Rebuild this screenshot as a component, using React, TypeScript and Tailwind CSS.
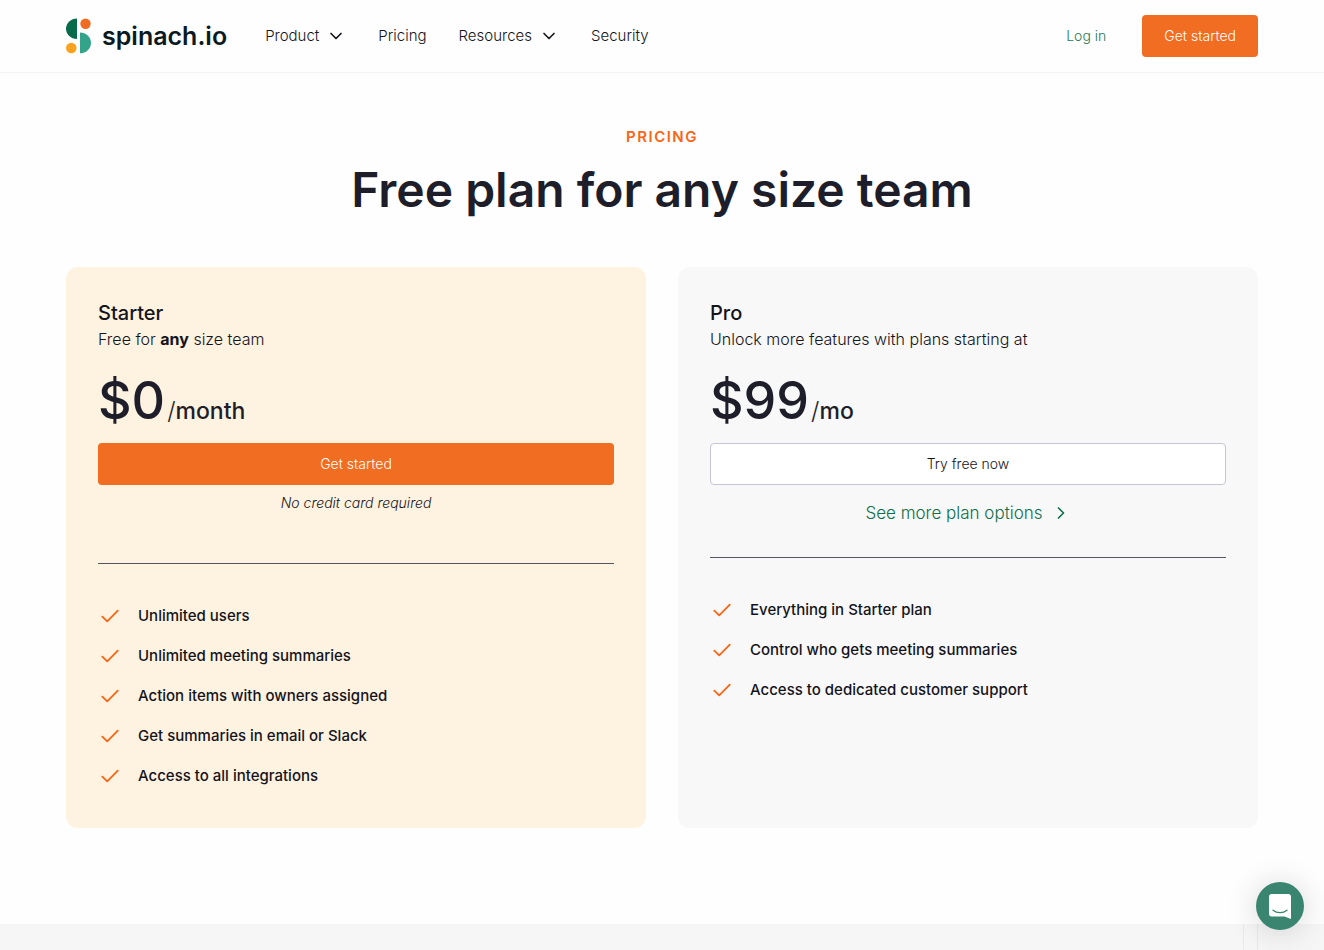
import React from 'react';
import { ChevronDown, ChevronRight } from 'lucide-react';

interface NavItem {
  label: string;
  hasMenu?: boolean;
}

const NAV_ITEMS: NavItem[] = [
  { label: 'Product', hasMenu: true },
  { label: 'Pricing' },
  { label: 'Resources', hasMenu: true },
  { label: 'Security' },
];

const STARTER_FEATURES = [
  'Unlimited users',
  'Unlimited meeting summaries',
  'Action items with owners assigned',
  'Get summaries in email or Slack',
  'Access to all integrations',
];

const PRO_FEATURES = [
  'Everything in Starter plan',
  'Control who gets meeting summaries',
  'Access to dedicated customer support',
];

function Logo() {
  return (
    <a href="#" className="flex items-center gap-[11px] text-[#0b1a20]">
      <svg width="25" height="36" viewBox="0 0 25 36" aria-hidden="true">
        <path d="M11 0.5V21C5 21 0 16.5 0 10.75S5 0.5 11 0.5Z" fill="#056b4a" />
        <circle cx="19.5" cy="5.7" r="5.2" fill="#f16c20" />
        <circle cx="5.3" cy="30" r="5.3" fill="#faa21e" />
        <path d="M14 14.5V35.3C20 35.3 25 30.7 25 24.9S20 14.5 14 14.5Z" fill="#33a489" />
      </svg>
      <span className="text-[25px] leading-8 font-semibold">spinach.io</span>
    </a>
  );
}

function Header() {
  return (
    <header className="border-b border-[#f3f3f3]">
      <div className="mx-auto flex h-[72px] max-w-[1192px] items-center">
        <Logo />
        <nav className="ml-[38px] flex items-center gap-8 text-[15px]">
          {NAV_ITEMS.map((item) =>
            item.hasMenu ? (
              <button key={item.label} type="button" className="flex items-center gap-[7px]">
                {item.label}
                <ChevronDown size={20} strokeWidth={2} />
              </button>
            ) : (
              <a key={item.label} href="#">
                {item.label}
              </a>
            ),
          )}
        </nav>
        <a href="#" className="ml-auto text-sm text-[#1f7a57]">
          Log in
        </a>
        <button type="button" className="ml-9 h-[42px] rounded bg-[#f16d22] px-[22px] text-sm text-white">
          Get started
        </button>
      </div>
    </header>
  );
}

function FeatureList({ items }: { items: string[] }) {
  return (
    <ul className="flex flex-col gap-4 text-[15px] leading-6 font-medium text-[#14141c]">
      {items.map((item) => (
        <li key={item} className="flex items-center gap-4">
          <svg width="24" height="24" viewBox="0 0 24 24" fill="none" aria-hidden="true">
            <path
              d="M4.3 12.6L9.2 17.3L19.8 6.7"
              stroke="#fb6514"
              strokeWidth="1.8"
              strokeLinecap="round"
              strokeLinejoin="round"
            />
          </svg>
          {item}
        </li>
      ))}
    </ul>
  );
}

function Price({ amount, period }: { amount: string; period: string }) {
  return (
    <p className="mt-4 flex items-baseline text-[#1e1e2a]">
      <span className="text-[52px] leading-[68px] font-medium">{amount}</span>
      <span className="ml-0.5 text-2xl font-light">/</span>
      <span className="text-[23px] font-medium">{period}</span>
    </p>
  );
}

function StarterCard() {
  return (
    <section className="rounded-xl bg-[#fef2e1] p-8 pb-10">
      <h2 className="text-xl leading-7 font-medium">Starter</h2>
      <p className="leading-6">
        Free for <strong className="font-bold">any</strong> size team
      </p>
      <Price amount="$0" period="month" />
      <button type="button" className="mt-2 h-[42px] w-full rounded bg-[#f16d22] text-sm text-white">
        Get started
      </button>
      <p className="mt-2 text-center text-sm leading-5 italic">No credit card required</p>
      <hr className="mt-[50px] mb-10 border-[#55555f]" />
      <FeatureList items={STARTER_FEATURES} />
    </section>
  );
}

function ProCard() {
  return (
    <section className="rounded-xl bg-[#f8f8f8] p-8 pb-10">
      <h2 className="text-xl leading-7 font-medium">Pro</h2>
      <p className="leading-6">Unlock more features with plans starting at</p>
      <Price amount="$99" period="mo" />
      <button type="button" className="mt-2 h-[42px] w-full rounded border border-[#c6c5d6] bg-white text-sm">
        Try free now
      </button>
      <a href="#" className="mt-4 flex items-center justify-center gap-2 text-[17px] leading-6 text-[#0d6e4b]">
        See more plan options
        <ChevronRight size={20} strokeWidth={2} />
      </a>
      <hr className="mt-8 mb-10 border-[#55555f]" />
      <FeatureList items={PRO_FEATURES} />
    </section>
  );
}

function ChatLauncher() {
  return (
    <button
      type="button"
      aria-label="Open chat"
      className="fixed right-5 bottom-5 flex size-12 items-center justify-center rounded-full bg-[#3a8570] shadow-[0_2px_32px_rgba(0,0,0,0.16)]"
    >
      <svg width="22" height="25" viewBox="0 0 22 25" fill="none" aria-hidden="true">
        <path
          d="M2.5 0H19.5C20.9 0 22 1.1 22 2.5V25L15.5 22.5H2.5C1.1 22.5 0 21.4 0 20V2.5C0 1.1 1.1 0 2.5 0Z"
          fill="#fff"
        />
        <path d="M4 16.2C8 19.4 14 19.4 18 16.2" stroke="#3a8570" strokeWidth="1.3" strokeLinecap="round" />
      </svg>
    </button>
  );
}

export default function App() {
  return (
    <div className="flex min-h-screen flex-col bg-[#fefefe] font-['Inter','Liberation_Sans',sans-serif] font-light text-[#14141c]">
      <Header />
      <main className="mx-auto w-full max-w-[1192px] pt-[52px] pb-24">
        <p className="text-center text-[15px] leading-6 font-semibold tracking-widest text-[#fb6514]">PRICING</p>
        <h1 className="mt-2 text-center text-5xl leading-[66px] font-semibold text-[#1e1e2a]">
          Free plan for any size team
        </h1>
        <div className="mt-11 grid grid-cols-2 gap-8">
          <StarterCard />
          <ProCard />
        </div>
      </main>
      <div className="flex flex-1 justify-end bg-[#f6f6f6] pr-[66px]">
        <div className="w-[15px] border-x border-[#e9e9e9]" />
      </div>
      <ChatLauncher />
    </div>
  );
}
